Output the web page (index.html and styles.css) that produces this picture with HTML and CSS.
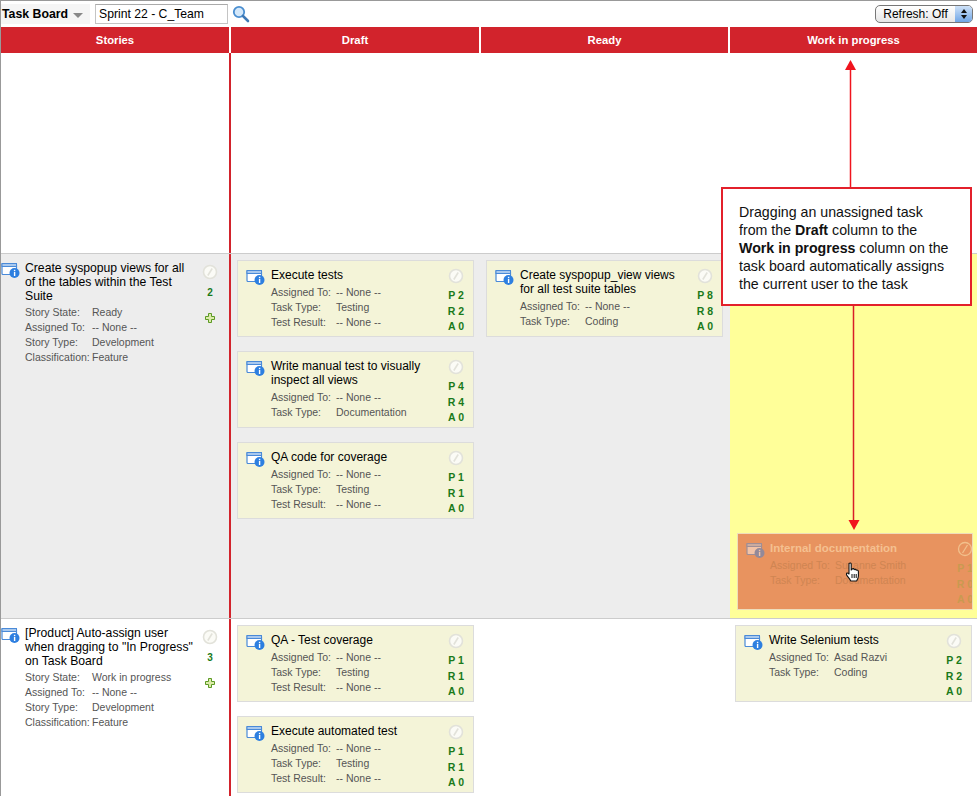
FILE: index.html
```html
<!DOCTYPE html>
<html lang="en">
<head>
    <meta charset="UTF-8">
    <title>Task Board</title>
    <link rel="stylesheet" href="styles.css">
</head>
<body>
    <svg class="defs" width="0" height="0">
        <symbol id="icon-item" viewBox="0 0 20 16">
            <rect x="1" y="1.5" width="14.5" height="11" rx="1" fill="#fff" stroke="#4a8ad8" stroke-width="1.2"/>
            <rect x="1" y="1.5" width="14.5" height="3" fill="#a9c9ee" stroke="#4a8ad8" stroke-width="1"/>
            <circle cx="13.5" cy="11" r="5" fill="#2d7fe0"/>
            <rect x="12.9" y="10" width="1.4" height="4" fill="#fff"/>
            <rect x="12.9" y="7.8" width="1.4" height="1.4" fill="#fff"/>
        </symbol>
        <symbol id="icon-block" viewBox="0 0 16 16">
            <circle cx="8" cy="8" r="6.5" fill="#fbfbf6" stroke="#e2e2da" stroke-width="1.6"/>
            <path d="M5.8 11.5 L10.2 4.5" stroke="#e2e2da" stroke-width="1.6" fill="none"/>
        </symbol>
        <symbol id="icon-plus" viewBox="0 0 10 10">
            <path d="M3.5 .5 H6.5 V3.5 H9.5 V6.5 H6.5 V9.5 H3.5 V6.5 H.5 V3.5 H3.5 Z" fill="#dcebaa" stroke="#5c9a24" stroke-width="1"/>
        </symbol>
    </svg>

    <div class="toolbar">
        <div class="board-menu">
            <span class="board-name">Task Board</span>
            <span class="caret"></span>
        </div>
        <input class="sprint-input" type="text" value="Sprint 22 - C_Team">
        <svg class="search-icon" width="18" height="18" viewBox="0 0 18 18">
            <circle cx="7" cy="7" r="5.2" fill="#d4e8fa" stroke="#4a8ed0" stroke-width="1.8"/>
            <path d="M11 11 L16 16" stroke="#3f79b5" stroke-width="2.6" stroke-linecap="round"/>
        </svg>
        <div class="refresh">
            <span class="refresh-label">Refresh: Off</span>
            <span class="refresh-arrows">
                <span class="arrow-up"></span>
                <span class="arrow-down"></span>
            </span>
        </div>
    </div>

    <div class="head-row">
        <div class="head-cell">Stories</div>
        <div class="head-cell">Draft</div>
        <div class="head-cell">Ready</div>
        <div class="head-cell">Work in progress</div>
    </div>

    <div class="swim swim-empty">
        <div class="cell story-cell"></div>
        <div class="cell draft-cell"></div>
        <div class="cell ready-cell"></div>
        <div class="cell work-cell"></div>
    </div>

    <div class="swim swim-active">
        <div class="cell story-cell">
            <div class="story">
                <svg class="story-icon"><use href="#icon-item"/></svg>
                <div class="story-body">
                    <div class="story-title">Create syspopup views for all of the tables within the Test Suite</div>
                    <div class="field"><span class="label">Story State:</span><span>Ready</span></div>
                    <div class="field"><span class="label">Assigned To:</span><span>-- None --</span></div>
                    <div class="field"><span class="label">Story Type:</span><span>Development</span></div>
                    <div class="field"><span class="label">Classification:</span><span>Feature</span></div>
                </div>
                <div class="story-side">
                    <svg class="block-icon"><use href="#icon-block"/></svg>
                    <div class="count">2</div>
                    <svg class="plus"><use href="#icon-plus"/></svg>
                </div>
            </div>
        </div>
        <div class="cell draft-cell">
            <div class="card">
                <svg class="card-icon"><use href="#icon-item"/></svg>
                <div class="card-body">
                    <div class="card-title">Execute tests</div>
                    <div class="field"><span class="label">Assigned To:</span><span>-- None --</span></div>
                    <div class="field"><span class="label">Task Type:</span><span>Testing</span></div>
                    <div class="field"><span class="label">Test Result:</span><span>-- None --</span></div>
                </div>
                <div class="card-side">
                    <svg class="block-icon"><use href="#icon-block"/></svg>
                    <div>P 2</div><div>R 2</div><div>A 0</div>
                </div>
            </div>
            <div class="card">
                <svg class="card-icon"><use href="#icon-item"/></svg>
                <div class="card-body">
                    <div class="card-title">Write manual test to visually inspect all views</div>
                    <div class="field"><span class="label">Assigned To:</span><span>-- None --</span></div>
                    <div class="field"><span class="label">Task Type:</span><span>Documentation</span></div>
                </div>
                <div class="card-side">
                    <svg class="block-icon"><use href="#icon-block"/></svg>
                    <div>P 4</div><div>R 4</div><div>A 0</div>
                </div>
            </div>
            <div class="card">
                <svg class="card-icon"><use href="#icon-item"/></svg>
                <div class="card-body">
                    <div class="card-title">QA code for coverage</div>
                    <div class="field"><span class="label">Assigned To:</span><span>-- None --</span></div>
                    <div class="field"><span class="label">Task Type:</span><span>Testing</span></div>
                    <div class="field"><span class="label">Test Result:</span><span>-- None --</span></div>
                </div>
                <div class="card-side">
                    <svg class="block-icon"><use href="#icon-block"/></svg>
                    <div>P 1</div><div>R 1</div><div>A 0</div>
                </div>
            </div>
        </div>
        <div class="cell ready-cell">
            <div class="card">
                <svg class="card-icon"><use href="#icon-item"/></svg>
                <div class="card-body">
                    <div class="card-title">Create syspopup_view views for all test suite tables</div>
                    <div class="field"><span class="label">Assigned To:</span><span>-- None --</span></div>
                    <div class="field"><span class="label">Task Type:</span><span>Coding</span></div>
                </div>
                <div class="card-side">
                    <svg class="block-icon"><use href="#icon-block"/></svg>
                    <div>P 8</div><div>R 8</div><div>A 0</div>
                </div>
            </div>
        </div>
        <div class="cell work-cell"></div>
    </div>

    <div class="swim swim-last">
        <div class="cell story-cell">
            <div class="story">
                <svg class="story-icon"><use href="#icon-item"/></svg>
                <div class="story-body">
                    <div class="story-title">[Product] Auto-assign user when dragging to "In Progress" on Task Board</div>
                    <div class="field"><span class="label">Story State:</span><span>Work in progress</span></div>
                    <div class="field"><span class="label">Assigned To:</span><span>-- None --</span></div>
                    <div class="field"><span class="label">Story Type:</span><span>Development</span></div>
                    <div class="field"><span class="label">Classification:</span><span>Feature</span></div>
                </div>
                <div class="story-side">
                    <svg class="block-icon"><use href="#icon-block"/></svg>
                    <div class="count">3</div>
                    <svg class="plus"><use href="#icon-plus"/></svg>
                </div>
            </div>
        </div>
        <div class="cell draft-cell">
            <div class="card">
                <svg class="card-icon"><use href="#icon-item"/></svg>
                <div class="card-body">
                    <div class="card-title">QA - Test coverage</div>
                    <div class="field"><span class="label">Assigned To:</span><span>-- None --</span></div>
                    <div class="field"><span class="label">Task Type:</span><span>Testing</span></div>
                    <div class="field"><span class="label">Test Result:</span><span>-- None --</span></div>
                </div>
                <div class="card-side">
                    <svg class="block-icon"><use href="#icon-block"/></svg>
                    <div>P 1</div><div>R 1</div><div>A 0</div>
                </div>
            </div>
            <div class="card">
                <svg class="card-icon"><use href="#icon-item"/></svg>
                <div class="card-body">
                    <div class="card-title">Execute automated test</div>
                    <div class="field"><span class="label">Assigned To:</span><span>-- None --</span></div>
                    <div class="field"><span class="label">Task Type:</span><span>Testing</span></div>
                    <div class="field"><span class="label">Test Result:</span><span>-- None --</span></div>
                </div>
                <div class="card-side">
                    <svg class="block-icon"><use href="#icon-block"/></svg>
                    <div>P 1</div><div>R 1</div><div>A 0</div>
                </div>
            </div>
        </div>
        <div class="cell ready-cell"></div>
        <div class="cell work-cell">
            <div class="card">
                <svg class="card-icon"><use href="#icon-item"/></svg>
                <div class="card-body">
                    <div class="card-title">Write Selenium tests</div>
                    <div class="field"><span class="label">Assigned To:</span><span>Asad Razvi</span></div>
                    <div class="field"><span class="label">Task Type:</span><span>Coding</span></div>
                </div>
                <div class="card-side">
                    <svg class="block-icon"><use href="#icon-block"/></svg>
                    <div>P 2</div><div>R 2</div><div>A 0</div>
                </div>
            </div>
        </div>
    </div>

    <!-- card being dragged, sits over the board -->
    <div class="card card-drag">
        <svg class="card-icon"><use href="#icon-item"/></svg>
        <div class="card-body">
            <div class="card-title">Internal documentation</div>
            <div class="field"><span class="label">Assigned To:</span><span>Suzanne Smith</span></div>
            <div class="field"><span class="label">Task Type:</span><span>Documentation</span></div>
        </div>
        <div class="card-side">
            <svg class="block-icon" viewBox="0 0 16 16">
                <circle cx="8" cy="8" r="6.5" fill="none" stroke="#f2c08c" stroke-width="1.3"/>
                <path d="M5.5 12 L10.5 4" stroke="#f2c08c" stroke-width="1.3"/>
            </svg>
            <div>P 1</div><div>R 0</div><div>A 0</div>
        </div>
    </div>

    <svg class="arrows" width="977" height="796" viewBox="0 0 977 796">
        <path d="M850.5 68 V187" stroke="#f0141e" stroke-width="1.5" fill="none"/>
        <path d="M850.5 60 L845 70 H856 Z" fill="#f0141e"/>
        <path d="M853.5 305 V522" stroke="#d81e28" stroke-width="1.5" fill="none"/>
        <path d="M854 530 L848.5 520 H859.5 Z" fill="#f0141e"/>
    </svg>

    <svg class="hand" width="16" height="20" viewBox="0 0 16 20">
        <path d="M4 1.5 C5 .5 6.2 1 6.2 2.2 V8 L7 7.6 V7 C8 6.2 9 6.6 9.2 7.6 C10 7 11 7.4 11.2 8.2 C12.2 7.8 13.4 8.4 13.4 9.6 V14 C13.4 16.4 12.2 18 11.6 19 H5.8 C5 17.4 3.6 15.8 2 13.6 C1 12.2 1.4 10.6 3 11.2 L4 12 Z" fill="#fff" stroke="#111" stroke-width="1.1" stroke-linejoin="round"/>
        <path d="M7 12 V16 M9.2 12 V16 M11.2 12 V16" stroke="#111" stroke-width="1"/>
    </svg>

    <div class="callout">
        Dragging an unassigned task<br>
        from the <b>Draft</b> column to the<br>
        <b>Work in progress</b> column on the<br>
        task board automatically assigns<br>
        the current user to the task
    </div>
</body>
</html>
```

FILE: styles.css
```css
html, body {
    margin: 0;
    padding: 0;
}

body {
    position: relative;
    width: 976px;
    height: 795px;
    overflow: hidden;
    background-color: #fff;
    border-top: 1px solid #999;
    border-left: 1px solid #999;
    font-family: "Liberation Sans", Arial, sans-serif;
    color: #000;
}

.defs {
    position: absolute;
}

/* toolbar */
.toolbar {
    display: flex;
    align-items: center;
    height: 26px;
}

.board-menu {
    display: flex;
    align-items: center;
    gap: 5px;
    width: 88px;
    height: 20px;
    padding-left: 1px;
    background-color: #f5f5f5;
}

.board-name {
    font-size: 12.3px;
    font-weight: bold;
}

.caret {
    width: 0;
    height: 0;
    margin-top: 2px;
    border-left: 5px solid transparent;
    border-right: 5px solid transparent;
    border-top: 5px solid #888;
}

.sprint-input {
    width: 133px;
    height: 20px;
    box-sizing: border-box;
    margin: 0 0 0 5px;
    padding: 0 3px;
    border: 1px solid #c4c4c4;
    border-top-color: #aaa;
    font-family: "Liberation Sans", Arial, sans-serif;
    font-size: 12.2px;
    color: #000;
}

.search-icon {
    margin-left: 4px;
}

.refresh {
    display: flex;
    width: 98px;
    height: 18px;
    box-sizing: border-box;
    margin-left: auto;
    margin-right: 4px;
    border: 1px solid #777;
    border-radius: 5px;
    overflow: hidden;
    background: linear-gradient(#fff, #e6e6e6);
}

.refresh-label {
    flex: 1;
    text-align: center;
    font-size: 12px;
    line-height: 16px;
}

.refresh-arrows {
    display: flex;
    flex-direction: column;
    align-items: center;
    justify-content: center;
    gap: 2px;
    width: 17px;
    background: linear-gradient(#cfe2f8, #6fa5e6);
}

.arrow-up, .arrow-down {
    width: 0;
    height: 0;
    border-left: 3px solid transparent;
    border-right: 3px solid transparent;
}

.arrow-up {
    border-bottom: 4px solid #111;
}

.arrow-down {
    border-top: 4px solid #111;
}

/* column headers */
.head-row {
    display: grid;
    grid-template-columns: 228px 248px 247px 1fr;
    gap: 2px;
}

.head-cell {
    height: 26px;
    background-color: #d2232c;
    color: #fff;
    font-size: 11.3px;
    font-weight: bold;
    line-height: 26px;
    text-align: center;
}

/* swim lanes */
.swim {
    display: grid;
    grid-template-columns: 230px 250px 249px 1fr;
}

.swim-empty {
    height: 200px;
    border-bottom: 1px solid #ccc;
}

.swim-active {
    height: 364px;
    border-bottom: 1px solid #ccc;
    background-color: #ededed;
}

.swim-active .work-cell {
    background-color: #ffff99;
}

.swim-last {
    height: 177px;
}

.story-cell {
    box-sizing: border-box;
    border-right: 2px solid #d2232c;
}

.draft-cell {
    padding: 6px 0 0 6px;
}

.ready-cell, .work-cell {
    padding: 6px 0 0 5px;
}

/* stories */
.story {
    display: flex;
    padding-top: 7px;
}

.story-icon {
    flex: none;
    width: 20px;
    height: 16px;
    margin-top: 1px;
    margin-right: 4px;
}

.story-body {
    width: 176px;
}

.story-title {
    width: 170px;
    margin-bottom: 2px;
    font-size: 12.2px;
    line-height: 14px;
}

.story .label {
    width: 67px;
}

.story-side {
    display: flex;
    flex-direction: column;
    align-items: center;
    width: 20px;
    margin-left: -1px;
    padding-top: 3px;
}

.block-icon {
    width: 16px;
    height: 16px;
}

.count {
    margin-top: 6px;
    color: #1a7a1a;
    font-size: 10px;
    font-weight: bold;
    line-height: 14px;
}

.plus {
    width: 10px;
    height: 10px;
    margin-top: 13px;
}

/* task cards */
.card {
    display: flex;
    box-sizing: border-box;
    width: 237px;
    height: 77px;
    margin-bottom: 14px;
    padding: 7px 0 0 8px;
    border: 1px solid #dcdcdc;
    background-color: #f4f4d8;
}

.card-icon {
    flex: none;
    width: 20px;
    height: 16px;
    margin-top: 1px;
    margin-right: 5px;
}

.card-body {
    width: 174px;
}

.card-title {
    width: 165px;
    margin-bottom: 3px;
    font-size: 12px;
    line-height: 14px;
}

.card-side {
    display: flex;
    flex-direction: column;
    align-items: center;
    width: 22px;
    color: #1a7a1a;
    font-size: 10.5px;
    font-weight: bold;
    line-height: 15.5px;
}

.card-side .block-icon {
    margin-bottom: 4px;
}

.field {
    display: flex;
    color: #555;
    font-size: 10.5px;
    line-height: 15px;
}

.label {
    flex: none;
    width: 65px;
}

/* overlays */
.card-drag {
    position: absolute;
    left: 736px;
    top: 532px;
    width: 236px;
    overflow: hidden;
    margin: 0;
    border-color: #eeddbb;
    background-color: #e8935f;
}

.card-drag .card-icon {
    margin-right: 4px;
    opacity: .45;
}

.card-drag .card-title {
    width: 180px;
    color: #f5c090;
    font-size: 11.5px;
    font-weight: bold;
}

.card-drag .field {
    color: #cf8552;
}

.card-drag .card-body {
    flex: none;
    width: 184px;
}

.card-drag .card-side {
    flex: none;
    color: #c89a50;
}

.arrows {
    position: absolute;
    left: -1px;
    top: -1px;
}

.hand {
    position: absolute;
    left: 844px;
    top: 561px;
}

.callout {
    position: absolute;
    left: 720px;
    top: 186px;
    box-sizing: border-box;
    width: 251px;
    height: 119px;
    padding: 14px 0 0 16px;
    border: 2px solid #e3202b;
    background-color: #fff;
    color: #111;
    font-size: 14.2px;
    line-height: 18px;
}
```
